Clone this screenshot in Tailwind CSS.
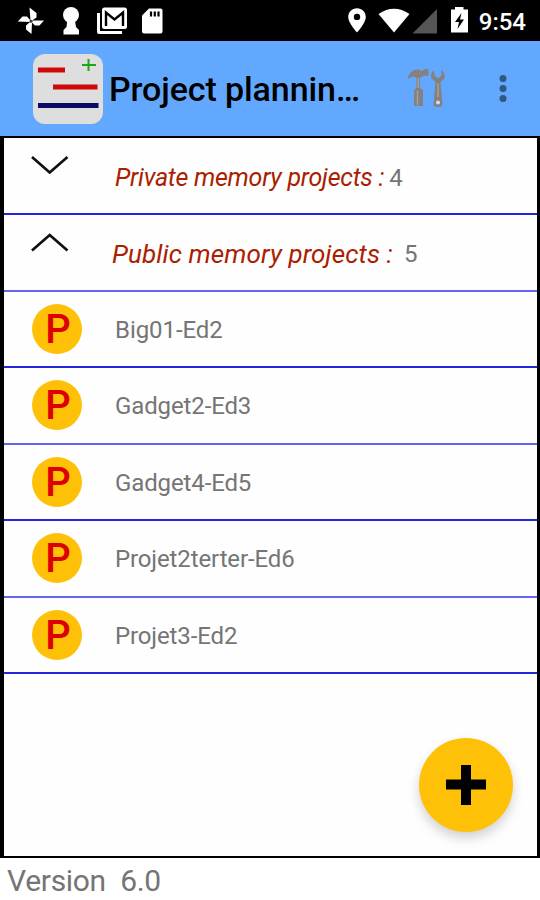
<!DOCTYPE html>
<html lang="en">
<head>
    <meta charset="UTF-8">
    <meta name="viewport" content="width=device-width, initial-scale=1.0">
    <title>Project planning</title>
    <script src="https://cdn.jsdelivr.net/npm/@tailwindcss/browser@4"></script>
</head>
<body class="bg-white font-[Roboto,sans-serif] text-[#757575]">
<div class="flex flex-col w-[540px] h-[900px] overflow-hidden">

    <!-- Status bar -->
    <div class="flex items-center justify-between h-[41px] shrink-0 bg-black">
        <svg class="w-[180px] h-[41px]" viewBox="0 0 180 41" fill="#fff">
            <!-- pinwheel -->
            <path d="M30.500 20.500L29.500 7.500L36.500 13V17.500L32 20.500L44 20.500L39.500 25.500H35L32 22.500L31.500 34L26 29.500V25.500L30 22L17.800 21.500L22.500 16.500H27Z" />
            <circle cx="31" cy="21.300" r="1.500" fill="#333" />
            <!-- keyhole -->
            <circle cx="71" cy="15" r="8" />
            <path d="M67.500 18H74.500L76 27L79 30V34.500H63.500V30L66.500 27Z" />
            <!-- mail -->
            <path d="M97 13H100V31H122V34H99Q97 34 97 32Z" />
            <rect x="102" y="7.500" width="25" height="21.500" rx="2.500" />
            <path d="M106 26V12.500L114.500 19.500L123 12.500V26" fill="none" stroke="#000" stroke-width="2.400" />
            <!-- sd card -->
            <path d="M149 8.500H160.500Q162.500 8.500 162.500 10.500V31.500Q162.500 33.500 160.500 33.500H144Q142 33.500 142 31.500V15.500Z" />
            <path d="M151 11.500V16.500M154.800 11.500V16.500M158.500 11.500V16.500" stroke="#000" stroke-width="2.200" />
        </svg>
        <div class="flex items-center pr-[14px]">
            <svg class="w-[134px] h-[41px]" viewBox="345 0 134 41" fill="#fff">
                <path fill-rule="evenodd" d="M357 8.200C352 8.200 348.200 12 348.200 17C348.200 23 357 32.500 357 32.500S365.800 23 365.800 17C365.800 12 362 8.200 357 8.200ZM357 13.700A3.200 3.200 0 1 1 357 20.100A3.200 3.200 0 1 1 357 13.700Z" />
                <path d="M378.500 14Q394 3.500 409.500 14L394 32.500Z" />
                <path d="M437 9V33.500H412.500Z" fill="#555" />
                <path d="M455 7H463.500V9.500H468V32.500H451V9.500H455Z" />
                <path d="M461.500 13L455 22H459L457.500 29L464 19.500H460Z" fill="#000" />
            </svg>
            <span class="mt-0.5 text-white text-2xl font-medium">9:54</span>
        </div>
    </div>

    <!-- App bar -->
    <header class="flex items-center h-[95px] shrink-0 pl-[33px] pr-7 bg-[#62a8ff]">
        <svg class="w-[70px] h-[70px]" viewBox="0 0 70 70">
            <rect width="70" height="70" rx="12" fill="#dedede" />
            <path d="M5 16H32M20 33H64.500" stroke="#cf0808" stroke-width="4.800" />
            <path d="M5 51.500H65.500" stroke="#0b0b64" stroke-width="4.800" />
            <path d="M49 11H63M55.500 5V17" stroke="#18a818" stroke-width="2" />
        </svg>
        <h1 class="ml-1.5 w-[254px] mt-px whitespace-nowrap text-[34px] tracking-[-0.1px] font-medium text-black">Project plannin…</h1>
        <svg class="ml-11 w-[38px] h-[40px]" viewBox="406 69 38 40">
            <!-- hammer -->
            <path d="M406.500 79C408 72.500 412 69.500 417 69.500L421 71L424 69H427.500V76L423 75.500L421 77H419V88L422 90V106H413V90L415.500 88V77.500L412 76.500Z" fill="#85817e" />
            <path d="M416.500 90.500V105M417.300 78V88" stroke="#a6a29e" stroke-width="1.400" />
            <!-- wrench -->
            <path d="M433 70L433.500 75.500L437 78.500L440.500 75.500L440 70Q444.500 73 443.500 78.500L439.500 82L441.500 104Q441.500 107 437 107Q432.500 107 432.500 104L434.500 82L430.500 78.500Q429 73 433 70Z" fill="#85817e" />
            <path d="M437 83V97" stroke="#a6a29e" stroke-width="1.400" />
            <circle cx="437" cy="102.500" r="2" fill="#c8e0ff" />
        </svg>
        <svg class="ml-auto mr-[5px] w-2 h-7" viewBox="0 0 8 28" fill="#315781">
            <circle cx="4" cy="3.500" r="3.500" />
            <circle cx="4" cy="13.500" r="3.500" />
            <circle cx="4" cy="23.500" r="3.500" />
        </svg>
    </header>

    <!-- Project list -->
    <main class="relative h-[722px] shrink-0 border-black border-y-2 border-l-4 border-r-[3px] bg-[#fefefe]">
        <div class="flex items-center h-[77px] pl-[27px] border-b-2 border-[#2525dc]">
            <svg class="-mt-[21px] w-[38px] h-[20px]" viewBox="0 0 38 20" fill="none" stroke="#111" stroke-width="2.700">
                <path d="M1 2L18.700 17.500L36.500 2" />
            </svg>
            <span class="ml-[46px] mt-1 text-[25px] tracking-[-0.26px] italic text-[#aa2000]">Private memory projects :</span>
            <span class="ml-[5px] mt-1 text-2xl">4</span>
        </div>
        <div class="flex items-center h-[77px] pl-[27px] border-b-2 border-[#6464f0]">
            <svg class="-mt-[20px] w-[38px] h-[20px]" viewBox="0 0 38 20" fill="none" stroke="#111" stroke-width="2.700">
                <path d="M1 17.500L18.700 2L36.500 17.500" />
            </svg>
            <span class="ml-[43px] mt-[3px] text-[26px] tracking-[0.11px] italic text-[#aa2000]">Public memory projects :</span>
            <span class="ml-[11px] mt-[3px] text-2xl">5</span>
        </div>
        <div class="flex items-center h-[76px] pl-7 pb-px border-b-2 border-[#2525dc]">
            <span class="flex items-center justify-center size-[50px] rounded-full bg-[#ffc107] pt-0.5 pl-0.5 text-[40px] font-medium text-[#dd0000]">P</span>
            <span class="ml-[33px] mt-[3px] text-2xl tracking-[-0.06px]">Big01-Ed2</span>
        </div>
        <div class="flex items-center h-[77px] pl-7 pb-0.5 border-b-2 border-[#6464f0]">
            <span class="flex items-center justify-center size-[50px] rounded-full bg-[#ffc107] pt-0.5 pl-0.5 text-[40px] font-medium text-[#dd0000]">P</span>
            <span class="ml-[33px] mt-0.5 text-2xl tracking-[-0.12px]">Gadget2-Ed3</span>
        </div>
        <div class="flex items-center h-[76px] pl-7 pb-px border-b-2 border-[#2525dc]">
            <span class="flex items-center justify-center size-[50px] rounded-full bg-[#ffc107] pt-0.5 pl-0.5 text-[40px] font-medium text-[#dd0000]">P</span>
            <span class="ml-[33px] mt-[3px] text-2xl tracking-[-0.12px]">Gadget4-Ed5</span>
        </div>
        <div class="flex items-center h-[77px] pl-7 pb-0.5 border-b-2 border-[#6464f0]">
            <span class="flex items-center justify-center size-[50px] rounded-full bg-[#ffc107] pt-0.5 pl-0.5 text-[40px] font-medium text-[#dd0000]">P</span>
            <span class="ml-[33px] mt-0.5 text-2xl tracking-[-0.12px]">Projet2terter-Ed6</span>
        </div>
        <div class="flex items-center h-[76px] pl-7 pb-px border-b-2 border-[#2525dc]">
            <span class="flex items-center justify-center size-[50px] rounded-full bg-[#ffc107] pt-0.5 pl-0.5 text-[40px] font-medium text-[#dd0000]">P</span>
            <span class="ml-[33px] mt-[3px] text-2xl tracking-[-0.12px]">Projet3-Ed2</span>
        </div>

        <!-- Add button -->
        <button class="absolute right-6 bottom-6 flex items-center justify-center size-[94px] rounded-full bg-[#ffc107] shadow-[0_6px_12px_rgba(0,0,0,0.18)]">
            <svg class="size-10" viewBox="0 0 40 40" stroke="#000" stroke-width="10">
                <path d="M0 19.500H40M20 0V40" />
            </svg>
        </button>
    </main>

    <footer class="pl-[7px] pt-[3px] text-[30px] tracking-[-0.3px] leading-10 whitespace-pre">Version  6.0</footer>
</div>
</body>
</html>
